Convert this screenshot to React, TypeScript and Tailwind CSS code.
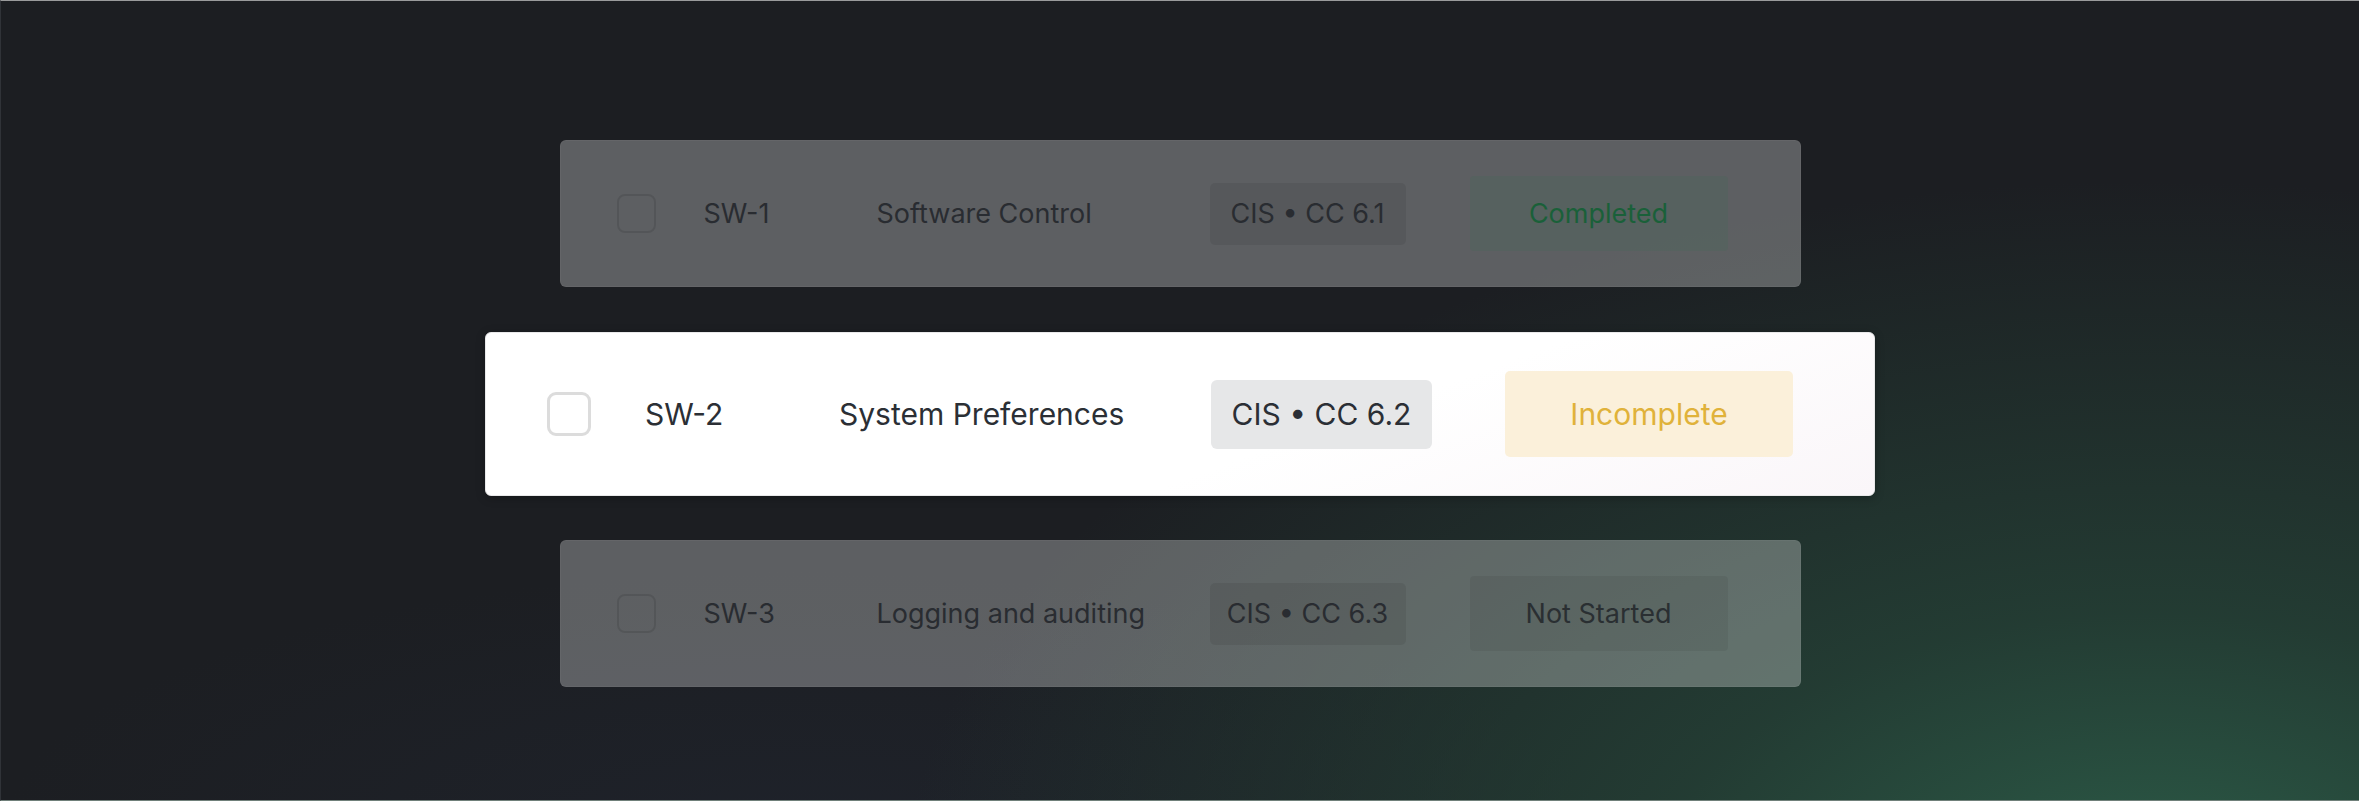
import React from "react";

type Row = {
  id: string;
  title: string;
  tag: string;
  status: string;
  kind: "done" | "todo";
};

function FadedRow({ row, className }: { row: Row; className?: string }) {
  return (
    <div
      className={
        "flex items-center w-[1241px] h-[147px] rounded-[6px] bg-white/[0.29] border border-white/[0.04] pl-[56px] pr-[74px] text-[#292c31] " +
        (className ?? "")
      }
    >
      <div className="w-[39px] h-[39px] shrink-0 rounded-[8px] border-2 border-black/[0.1]" />
      <div className="ml-[48px] w-[173px] shrink-0 text-[27px] leading-none">{row.id}</div>
      <div className="w-[333px] shrink-0 text-[27px] leading-none">{row.title}</div>
      <div className="w-[196px] h-[62px] shrink-0 rounded-[5px] bg-black/[0.07] flex items-center justify-center text-[27px] leading-none">
        {row.tag}
      </div>
      <div
        className={
          row.kind === "done"
            ? "ml-[64px] w-[258px] h-[75px] shrink-0 rounded-[4px] bg-[rgba(30,120,70,0.1)] flex items-center justify-center text-[27px] leading-none text-[#1a6039]"
            : "ml-[64px] w-[258px] h-[75px] shrink-0 rounded-[4px] bg-black/[0.06] flex items-center justify-center text-[27px] leading-none text-[#2a2f32]"
        }
      >
        {row.status}
      </div>
    </div>
  );
}

function ActiveRow() {
  return (
    <div className="mt-[45px] flex items-center w-[1390px] h-[164px] rounded-[6px] bg-[linear-gradient(160deg,#ffffff_60%,#faf6f9_100%)] border border-[#e9e9ea] shadow-[0_2px_10px_rgba(0,0,0,0.25)] pl-[61px] pr-[83px] text-[#2b2f35]">
      <div className="w-[44px] h-[44px] shrink-0 rounded-[9px] border-[3px] border-[#dcdcdc]" />
      <div className="ml-[54px] w-[194px] shrink-0 text-[30px] leading-none">SW-2</div>
      <div className="w-[372px] shrink-0 text-[30px] leading-none">System Preferences</div>
      <div className="w-[221px] h-[69px] shrink-0 rounded-[6px] bg-[#e6e7e8] flex items-center justify-center text-[30px] leading-none">
        CIS • CC 6.2
      </div>
      <div className="ml-[73px] w-[288px] h-[86px] shrink-0 rounded-[5px] bg-[#fbf0da] flex items-center justify-center text-[30px] leading-none text-[#e0b23a]">
        Incomplete
      </div>
    </div>
  );
}

export default function App() {
  const r1: Row = { id: "SW-1", title: "Software Control", tag: "CIS • CC 6.1", status: "Completed", kind: "done" };
  const r3: Row = { id: "SW-3", title: "Logging and auditing", tag: "CIS • CC 6.3", status: "Not Started", kind: "todo" };
  return (
    <div className="w-[2359px] h-[801px] overflow-hidden font-[Inter,sans-serif] border-t border-t-[#9a9b9c] border-l border-l-[#303338] border-b border-b-[#70807a] bg-[#1c1e22] bg-[radial-gradient(ellipse_1250px_720px_at_2150px_900px,rgba(44,92,72,1)_0%,rgba(38,72,58,0.7)_40%,rgba(28,30,34,0)_100%),radial-gradient(ellipse_800px_260px_at_800px_830px,rgba(32,37,48,0.6)_0%,rgba(28,30,34,0)_100%)] flex flex-col items-center pt-[139px]">
      <FadedRow row={r1} />
      <ActiveRow />
      <FadedRow row={r3} className="mt-[44px]" />
    </div>
  );
}
